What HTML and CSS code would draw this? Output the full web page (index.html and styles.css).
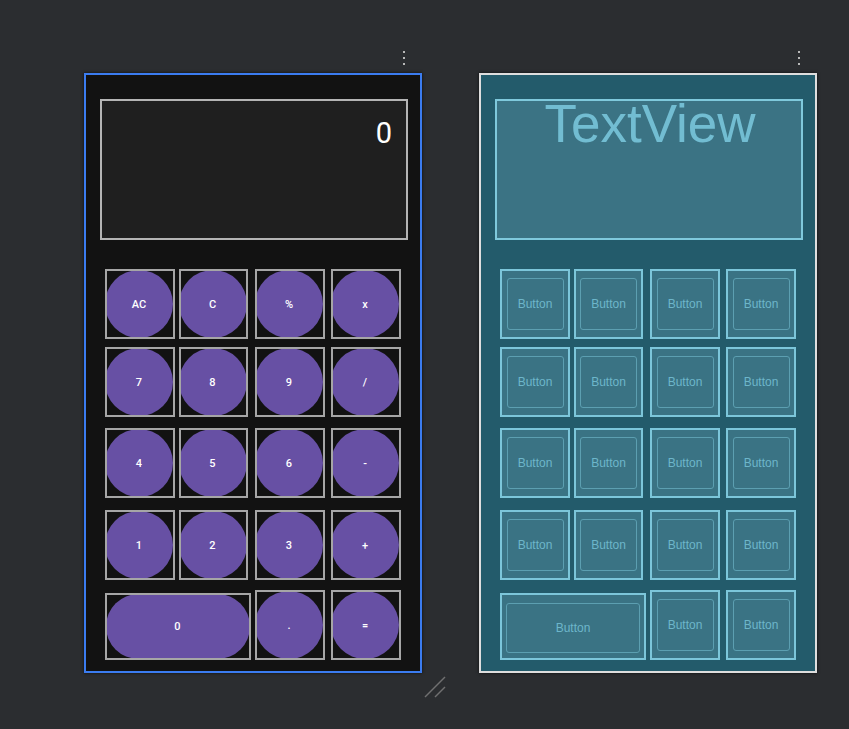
FILE: index.html
```html
<!DOCTYPE html>
<html>
<head>
<meta charset="utf-8">
<link rel="stylesheet" href="styles.css">
</head>
<body>
<div class="stage">
  <div class="device">
    <div class="menu"><div class="dots"><i></i><i></i><i></i></div></div>
    <div class="frame dark">
      <div class="display"><span class="value">0</span></div>
      <div class="keys">
        <div class="key"><span class="circle">AC</span></div>
        <div class="key k2"><span class="circle">C</span></div>
        <div class="key"><span class="circle">%</span></div>
        <div class="key"><span class="circle">x</span></div>
        <div class="key"><span class="circle">7</span></div>
        <div class="key k2"><span class="circle">8</span></div>
        <div class="key"><span class="circle">9</span></div>
        <div class="key"><span class="circle">/</span></div>
        <div class="key"><span class="circle">4</span></div>
        <div class="key k2"><span class="circle">5</span></div>
        <div class="key"><span class="circle">6</span></div>
        <div class="key"><span class="circle">-</span></div>
        <div class="key"><span class="circle">1</span></div>
        <div class="key k2"><span class="circle">2</span></div>
        <div class="key"><span class="circle">3</span></div>
        <div class="key"><span class="circle">+</span></div>
        <div class="key wide"><span class="circle pill">0</span></div>
        <div class="key"><span class="circle">.</span></div>
        <div class="key"><span class="circle">=</span></div>
      </div>
    </div>
  </div>
  <div class="device">
    <div class="menu"><div class="dots"><i></i><i></i><i></i></div></div>
    <div class="frame blue">
      <div class="display bp"><span class="tv">TextView</span></div>
      <div class="keys">
        <div class="key bkey"><span class="inner">Button</span></div>
        <div class="key bkey k2"><span class="inner">Button</span></div>
        <div class="key bkey"><span class="inner">Button</span></div>
        <div class="key bkey"><span class="inner">Button</span></div>
        <div class="key bkey"><span class="inner">Button</span></div>
        <div class="key bkey k2"><span class="inner">Button</span></div>
        <div class="key bkey"><span class="inner">Button</span></div>
        <div class="key bkey"><span class="inner">Button</span></div>
        <div class="key bkey"><span class="inner">Button</span></div>
        <div class="key bkey k2"><span class="inner">Button</span></div>
        <div class="key bkey"><span class="inner">Button</span></div>
        <div class="key bkey"><span class="inner">Button</span></div>
        <div class="key bkey"><span class="inner">Button</span></div>
        <div class="key bkey k2"><span class="inner">Button</span></div>
        <div class="key bkey"><span class="inner">Button</span></div>
        <div class="key bkey"><span class="inner">Button</span></div>
        <div class="key bkey wide"><span class="inner">Button</span></div>
        <div class="key bkey"><span class="inner">Button</span></div>
        <div class="key bkey"><span class="inner">Button</span></div>
      </div>
    </div>
  </div>
</div>
<svg class="resize" width="24" height="24" viewBox="0 0 24 24">
  <line x1="1" y1="21" x2="21" y2="1" stroke="#707070" stroke-width="1.5"/>
  <line x1="11" y1="21" x2="21" y2="11" stroke="#707070" stroke-width="1.5"/>
</svg>
</body>
</html>
```

FILE: styles.css
```css
* { box-sizing: border-box; }
html, body { margin: 0; padding: 0; }
body {
  width: 849px;
  height: 729px;
  overflow: hidden;
  background: #2b2d30;
  font-family: Roboto, "Liberation Sans", sans-serif;
  position: relative;
}
.stage {
  display: flex;
  gap: 57px;
  padding: 48px 0 0 84px;
}
.device { width: 338px; }
.menu {
  height: 25px;
  display: flex;
  justify-content: flex-end;
  padding: 3px 17px 0 0;
}
.dots {
  display: flex;
  flex-direction: column;
  gap: 4px;
}
.dots i {
  display: block;
  width: 2px;
  height: 2px;
  background: #b8b8b8;
}
.frame {
  height: 600px;
  padding: 24px 0 0 14px;
  box-shadow: 0 0 3px rgba(0,0,0,0.7);
}
.frame.dark {
  background: #121212;
  border: 2px solid #3b7cf0;
}
.frame.blue {
  background: #235b6b;
  border: 2px solid #dedede;
}
.display {
  width: 308px;
  height: 141px;
  border: 2px solid #b4b4b4;
  background: #1f1f1f;
  display: flex;
  justify-content: flex-end;
  padding: 18px 14px 0 0;
}
.value {
  color: #ffffff;
  font-size: 29px;
  line-height: 29px;
  font-weight: 400;
}
.display.bp {
  background: #3b7384;
  border: 2px solid #7fc9dc;
  justify-content: center;
  padding: 0;
}
.tv {
  font-family: "Liberation Sans", Arial, sans-serif;
  font-size: 53px;
  line-height: 53px;
  color: #72bdd2;
  margin-top: -4px;
  margin-left: 2px;
}
.keys {
  margin: 29px 0 0 5px;
  display: grid;
  grid-template-columns: 74px 76px 76px 70px;
  grid-template-rows: 78px 81px 82px 80px 70px;
  align-items: start;
}
.key {
  position: relative;
  width: 70px;
  height: 70px;
  display: flex;
  align-items: center;
  justify-content: center;
}
.key.k2 { width: 69px; }
.key::after {
  content: "";
  position: absolute;
  inset: 0;
  border: 2px solid #a6a6a6;
  pointer-events: none;
}
.key.wide {
  grid-column: span 2;
  width: 146px;
  height: 67px;
  margin-top: 3px;
}
.circle {
  width: 68px;
  height: 68px;
  border-radius: 50%;
  background: #6750a4;
  color: #ffffff;
  font-size: 11px;
  font-weight: 500;
  display: flex;
  align-items: center;
  justify-content: center;
  margin-left: -2px;
}
.circle.pill {
  width: 144px;
  height: 65px;
  border-radius: 33px;
  margin-left: -1px;
}
.bkey {
  background: #3a7384;
}
.bkey::after {
  border: 2px solid #7cc6da;
}
.inner {
  width: 57px;
  height: 52px;
  border: 1px solid #5c9fb1;
  border-radius: 3px;
  display: flex;
  align-items: center;
  justify-content: center;
  font-family: "Liberation Sans", Arial, sans-serif;
  font-size: 12px;
  color: #6db6ca;
}
.bkey.wide .inner {
  width: 134px;
  height: 50px;
  margin-top: 2px;
}
.resize {
  position: absolute;
  left: 424px;
  top: 676px;
}
```
